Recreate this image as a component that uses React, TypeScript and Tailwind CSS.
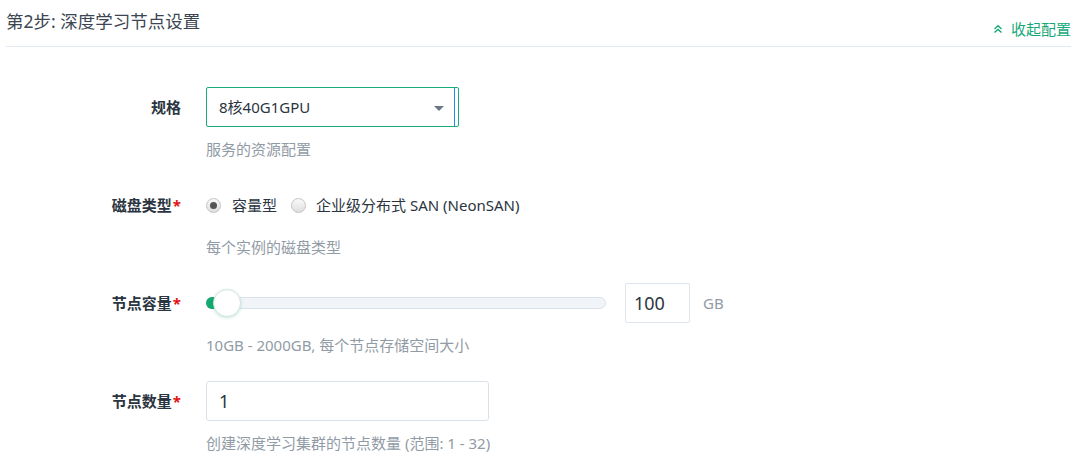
import React from "react"

function ChevronsUp() {
  return (
    <svg width="10" height="10" viewBox="0 0 10 10" fill="none" className="text-[#18a878]">
      <path d="M1.5 5 L5 1.8 L8.5 5" stroke="currentColor" strokeWidth="1.4" />
      <path d="M1.5 8.6 L5 5.4 L8.5 8.6" stroke="currentColor" strokeWidth="1.4" />
    </svg>
  )
}

function Radio({ checked }: { checked?: boolean }) {
  return (
    <span className="w-[15px] h-[15px] rounded-full border border-[#c4c4c4] bg-gradient-to-b from-[#fafafa] to-[#dedede] flex items-center justify-center shrink-0">
      {checked && <span className="w-[7px] h-[7px] rounded-full bg-[#555]" />}
    </span>
  )
}

function FormItem({ label, required, help, children }: { label: string; required?: boolean; help: string; children: React.ReactNode }) {
  return (
    <div className="flex">
      <div className="w-[175px] h-10 flex items-center justify-end text-[15px] font-bold text-[#2b3541] shrink-0">
        {label}
        {required && <span className="text-[#e3110f] ml-[1px]">*</span>}
      </div>
      <div className="ml-[25px] flex flex-col">
        <div className="h-10 flex items-center">{children}</div>
        <div className="mt-3 leading-5 text-[15px] text-[#919ba6]">{help}</div>
      </div>
    </div>
  )
}

export default function App() {
  return (
    <div className="w-[1088px] h-[467px] bg-white pl-[6px] pr-[17px] font-['Noto_Sans','Noto_Sans_CJK_SC',sans-serif] overflow-hidden">
      {/* header */}
      <div className="h-[47px] flex justify-between border-b border-[#e3e9f0]">
        <div className="pt-[9px] leading-6 text-[17.5px] text-[#3b4652]">第2步: 深度学习节点设置</div>
        <div className="self-end pb-[7px] flex items-center gap-[8px] leading-5 text-[15px] text-[#18a878]">
          <ChevronsUp />
          收起配置
        </div>
      </div>

      <div className="mt-10 flex flex-col gap-[26px]">
        <FormItem label="规格" help="服务的资源配置">
          <div className="relative w-[253px] h-10 border border-[#1aab7b] rounded-[2px] flex items-center pl-3 text-[15px] text-[#2b3541]">
            8核40G1GPU
            <span className="absolute right-[14px] top-[18px] w-0 h-0 border-l-[5px] border-r-[5px] border-t-[5px] border-l-transparent border-r-transparent border-t-[#6b7785]" />
            <span className="absolute right-[3px] top-0 bottom-0 w-[1px] bg-[#1d8cf0]" />
          </div>
        </FormItem>

        <FormItem label="磁盘类型" required help="每个实例的磁盘类型">
          <div className="flex items-center text-[15px] text-[#2b3541]">
            <Radio checked />
            <span className="ml-[11px]">容量型</span>
            <span className="ml-[14px]"><Radio /></span>
            <span className="ml-[10px]">企业级分布式 SAN (NeonSAN)</span>
          </div>
        </FormItem>

        <FormItem label="节点容量" required help="10GB - 2000GB, 每个节点存储空间大小">
          <div className="flex items-center">
            <div className="relative w-[400px] h-[12px] rounded-full bg-[#f1f4f8] border border-[#dbe3ea]">
              <div className="absolute left-[-1px] top-[-1px] h-[12px] w-[16px] rounded-l-full bg-[#13a96f]" />
              <div className="absolute left-[6px] top-[-9px] w-[28px] h-[28px] rounded-full bg-white border border-[#d3e4df] shadow-[0_1px_3px_rgba(19,169,111,0.25)]" />
            </div>
            <div className="ml-[19px] w-[65px] h-10 border border-[#dde4eb] rounded-[2px] flex items-center pl-[8px] text-[18px] text-[#2b3541]">
              100
            </div>
            <span className="ml-[13px] text-[15px] text-[#919ba6]">GB</span>
          </div>
        </FormItem>

        <FormItem label="节点数量" required help="创建深度学习集群的节点数量 (范围: 1 - 32)">
          <div className="w-[283px] h-10 border border-[#d9e2ea] rounded-[3px] flex items-center pl-[12px] text-[18px] text-[#2b3541]">
            1
          </div>
        </FormItem>
      </div>
    </div>
  )
}
